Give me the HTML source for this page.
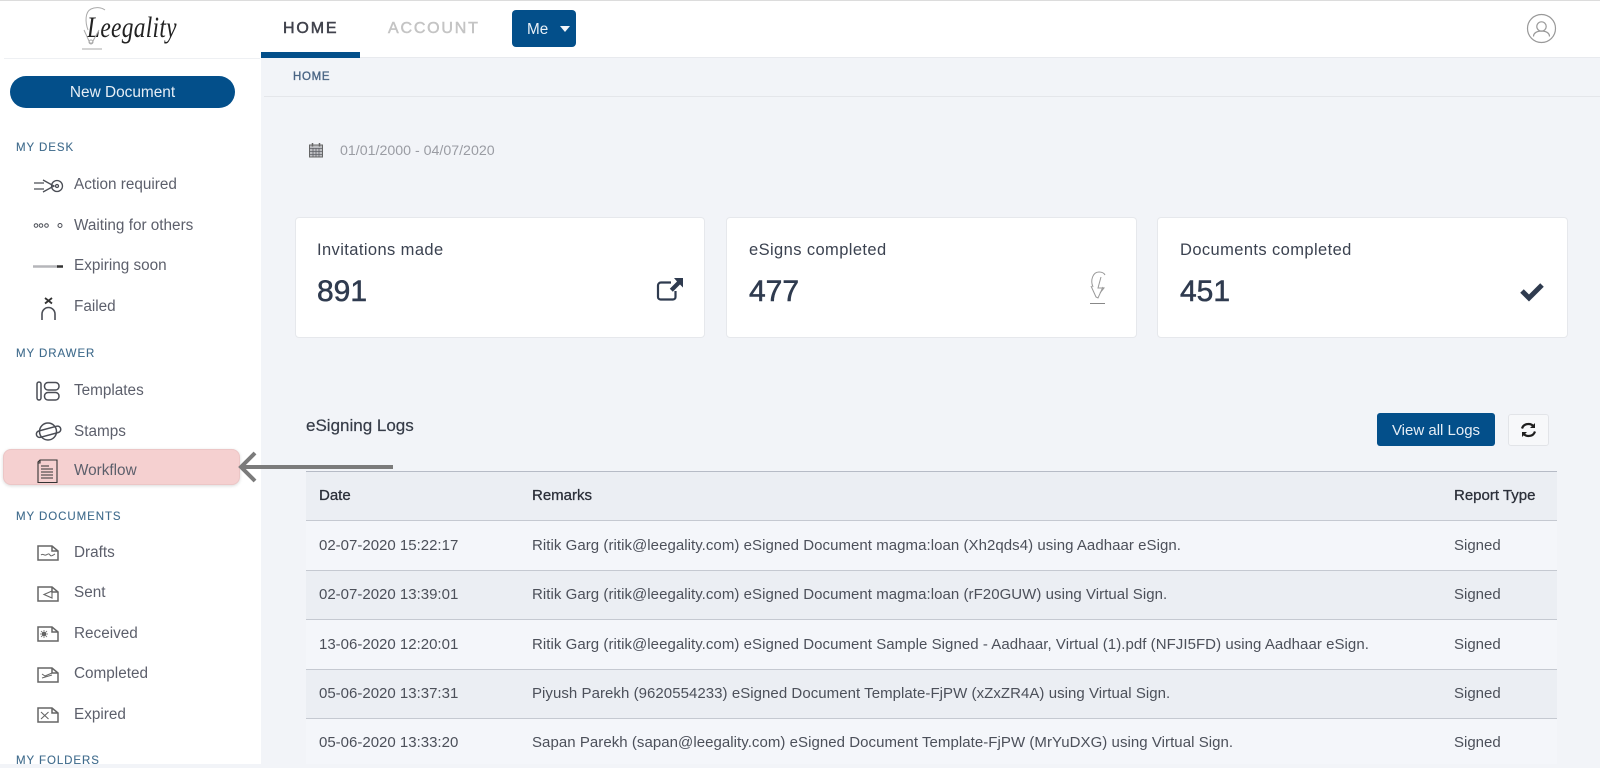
<!DOCTYPE html>
<html lang="en"><head><meta charset="utf-8"><title>Leegality</title>
<style>
*{box-sizing:border-box}
html,body{margin:0;padding:0;width:1600px;height:764px;overflow:hidden;background:#f2f4f8;font-family:"Liberation Sans",sans-serif}
.a{position:absolute;white-space:nowrap}
svg{position:absolute;overflow:visible}
.sec{position:absolute;left:16px;font-size:11.5px;letter-spacing:.93px;color:#3f6b8c;line-height:14px;white-space:nowrap;-webkit-text-stroke:.1px #3f6b8c}
.it{position:absolute;left:74px;font-size:15.3px;color:#5c5f6b;line-height:20px;white-space:nowrap}
.card{position:absolute;top:217px;height:121px;background:#fff;border:1px solid #e6e8ec;border-radius:4px}
.ct{position:absolute;font-size:16.5px;letter-spacing:.4px;color:#3b4250;line-height:20px;white-space:nowrap;top:240px}
.cn{position:absolute;font-size:30px;color:#2f3b4f;line-height:36px;top:274px;white-space:nowrap;-webkit-text-stroke:.55px #2f3b4f}
.row{position:absolute;left:306px;width:1251px;border-bottom:1px solid #c5c9d1}
.t{position:absolute;font-size:15px;color:#4c505a;line-height:20px;white-space:nowrap}
.r{letter-spacing:.05px}
.h{color:#2c303a;-webkit-text-stroke:.3px #2c303a}
</style></head><body>
<div class="a" style="left:0;top:0;width:1600px;height:1px;background:#dcdcdc"></div>
<!-- sidebar -->
<div class="a" style="left:0;top:1px;width:261px;height:763px;background:#fff"></div>
<div class="a" style="left:4px;top:58px;width:256px;height:1px;background:#eef0f3"></div>
<div class="a" style="left:87px;top:10px;font-family:'Liberation Serif',serif;font-style:italic;font-size:30px;line-height:36px;color:#222;transform-origin:0 0;transform:scaleX(.78);letter-spacing:.4px">Leegality</div>
<svg style="left:0;top:0" width="120" height="56" fill="none" stroke="#aaa"><path d="M88 30C85 22 85 12 91 9c4-2 10-2 14 1"/><path d="M84 30l5 11c1 3 3 3 4 0l6-11"/><circle cx="91" cy="42" r="2"/><path d="M82 49h20"/></svg>
<div class="a" style="left:10px;top:76px;width:225px;height:32px;border-radius:16px;background:#034f8a;color:#e6eef6;font-size:15.4px;line-height:33px;text-align:center">New Document</div>

<div class="sec" style="top:141px">MY DESK</div>
<div class="it" style="top:175px">Action required</div>
<div class="it" style="top:216px">Waiting for others</div>
<div class="it" style="top:256px">Expiring soon</div>
<div class="it" style="top:297px">Failed</div>
<div class="sec" style="top:347px">MY DRAWER</div>
<div class="it" style="top:381px">Templates</div>
<div class="it" style="top:422px">Stamps</div>
<div class="a" style="left:3px;top:449px;width:237px;height:36px;border-radius:8px;background:#f5d0d0;border:1px solid #ecc6c6;box-shadow:0 1px 3px rgba(0,0,0,.15)"></div>
<div class="it" style="top:461px">Workflow</div>
<div class="sec" style="top:510px">MY DOCUMENTS</div>
<div class="it" style="top:543px">Drafts</div>
<div class="it" style="top:583px">Sent</div>
<div class="it" style="top:624px">Received</div>
<div class="it" style="top:664px">Completed</div>
<div class="it" style="top:705px">Expired</div>
<div class="sec" style="top:754px">MY FOLDERS</div>

<!-- sidebar icons -->
<svg style="left:0;top:0" width="260" height="764" fill="none" stroke="#4a4d55" stroke-width="1.3">
<path d="M34 183h10M34 189h10M43 180l11 6-11 6"/><circle cx="57" cy="186" r="5.500"/><circle cx="57" cy="186" r="1.500"/>
<g stroke-width="1"><circle cx="36" cy="225.500" r="1.800"/><circle cx="41" cy="225.500" r="1.800"/><circle cx="46.500" cy="225.500" r="1.800"/><circle cx="60" cy="225.500" r="2"/></g>
<path d="M33 266.500h25" stroke="#b5b6ba" stroke-width="2.500"/><path d="M57 266.500h6" stroke="#333" stroke-width="2.500"/>
<path d="M45 298l7 5.500M52 298l-7 5.500" stroke-width="1.800" stroke="#333"/><path d="M42 320v-6a6.500 6.500 0 0 1 13 0v6" stroke-width="1.600"/>
<g stroke-width="1.500"><rect x="37" y="382" width="4" height="18" rx="2"/><rect x="44.500" y="382.500" width="14.500" height="7.500" rx="3.500"/><rect x="44.500" y="392.500" width="14.500" height="7.500" rx="3.500"/>
<circle cx="48" cy="431.500" r="8.500"/><rect x="36" y="428.500" width="25" height="6.500" rx="3.200" transform="rotate(-15 48.500 431.500)"/></g>
<path d="M40 460h17v22.500H38V462zM40 460v3h-2M41 466h8M41 469h12M41 472h12M41 475h12M41 478h12" stroke="#333" stroke-width="1.100"/>
<g stroke="#666" stroke-width="1.500">
<path d="M38 546h14l6 5v9H38zM52 546v5h6"/><path d="M41 555c2-2 3 1 5 0s3-2 4 0 3 0 5-1" stroke-width="1"/>
<path d="M38 587h14l6 5v9H38zM52 587v5h6"/><path d="M52 591l-8 3.500 8 3.500z" stroke-width="1.100"/>
<path d="M38 627h14l6 5v9H38zM52 627v5h6"/><circle cx="44" cy="634" r="2" fill="#444" stroke="none"/><path d="M44 630v8M40 634h8M41 631l6 6M47 631l-6 6" stroke-width=".8"/>
<path d="M38 668h14l6 5v9H38zM52 668v5h6"/><path d="M42 674l3 2 7-3M42 678l10-3" stroke-width="1"/>
<path d="M38 708h14l6 5v9H38zM52 708v5h6"/><path d="M41 712l7.500 7M48.500 712l-7.500 7" stroke-width="1.100"/>
</g>
</svg>

<!-- top bar -->
<div class="a" style="left:261px;top:1px;width:1339px;height:57px;background:#fff;border-bottom:1px solid #e8eaee"></div>
<div class="a" style="left:261px;top:52px;width:99px;height:6px;background:#034f8a"></div>
<div class="a" style="left:283px;top:19px;font-size:16px;letter-spacing:1.85px;line-height:20px;color:#40424c;-webkit-text-stroke:.5px #40424c">HOME</div>
<div class="a" style="left:388px;top:19px;font-size:16px;letter-spacing:1.8px;line-height:20px;color:#c4c4c4;-webkit-text-stroke:.5px #c4c4c4">ACCOUNT</div>
<div class="a" style="left:512px;top:10px;width:64px;height:37px;border-radius:4px;background:#034f8a"></div>
<div class="a" style="left:527px;top:20px;font-size:15.3px;line-height:20px;color:#e8f0f7">Me</div>
<svg style="left:560px;top:26px" width="12" height="7"><path d="M0 0h10L5 6z" fill="#f2f6fa"/></svg>
<svg style="left:1527px;top:14px" width="30" height="30" fill="none" stroke="#999" stroke-width="1.200"><circle cx="14.500" cy="14.500" r="14"/><circle cx="14.500" cy="12.500" r="4.700"/><path d="M6.500 22.500c0-3.500 3.500-5.500 8-5.500s8 2 8 5.500"/></svg>

<!-- breadcrumb -->
<div class="a" style="left:293px;top:70px;font-size:11.5px;letter-spacing:.7px;line-height:14px;color:#4a6584;-webkit-text-stroke:.35px #4a6584">HOME</div>
<div class="a" style="left:264px;top:96px;width:1336px;height:1px;background:#e4e6ea"></div>
<svg style="left:309px;top:143px" width="15" height="15" fill="none" stroke="#666" stroke-width="1"><rect x=".5" y="2" width="13" height="12" fill="#bdbec2"/><path d="M.5 5.500h13M.5 8.500h13M.5 11.500h13M4 5v9M7 5v9M10 5v9" stroke="#5f6067" stroke-width=".8"/><path d="M3.500 0v3.500M10.500 0v3.500" stroke-width="1.500"/></svg>
<div class="a" style="left:340px;top:141px;font-size:14.2px;line-height:20px;color:#9a9ca3">01/01/2000 - 04/07/2020</div>

<!-- cards -->
<div class="card" style="left:295px;width:410px"></div>
<div class="card" style="left:726px;width:411px"></div>
<div class="card" style="left:1157px;width:411px"></div>
<div class="ct" style="left:317px">Invitations made</div><div class="cn" style="left:317px">891</div>
<div class="ct" style="left:749px">eSigns completed</div><div class="cn" style="left:749px">477</div>
<div class="ct" style="left:1180px">Documents completed</div><div class="cn" style="left:1180px">451</div>
<svg style="left:656px;top:277px" width="28" height="24" fill="none"><path d="M15 5.500H5a3 3 0 0 0-3 3V20a2.500 2.500 0 0 0 2.500 2.500H17a2.500 2.500 0 0 0 2.500-2.500v-6" stroke="#2f3b4f" stroke-width="2.200"/><path d="M27 1v9.500l-3-3-7.200 7.200-3-3 7.200-7.200-3-3.500z" fill="#2f3b4f"/></svg>
<svg style="left:1087px;top:271px" width="22" height="36" fill="none" stroke="#999"><path d="M6 16C3 9 6 1 12 1c3 0 5 1 6 3"/><path d="M4 15l5 11 2 1 5-11"/><path d="M14 6l-3 11h6l-4 5"/><path d="M3 32.500h15" stroke="#888"/></svg>
<svg style="left:1520px;top:281px" width="24" height="20"><path d="M2 10l7 7L22 4" fill="none" stroke="#2f3b4f" stroke-width="5"/></svg>

<!-- logs header -->
<div class="a" style="left:306px;top:416px;font-size:17px;line-height:20px;color:#363c48;-webkit-text-stroke:.2px #363c48">eSigning Logs</div>
<div class="a" style="left:1377px;top:413px;width:118px;height:33px;border-radius:3px;background:#034f8a;color:#e6eef6;font-size:15px;line-height:35px;text-align:center">View all Logs</div>
<div class="a" style="left:1508px;top:414px;width:41px;height:32px;border-radius:3px;background:#f7f8fa;border:1px solid #e2e4e8"></div>
<svg style="left:1520px;top:422px" width="17" height="16" fill="none" stroke="#1f1f1f" stroke-width="2.200"><path d="M2 6.500C3 3.500 5.500 2 8.500 2c2 0 4 1 5 2.500M15 9.500C14 12.500 11.500 14 8.500 14c-2 0-4-1-5-2.500"/><path d="M15 1v5h-5zM2 15v-5h5z" fill="#1f1f1f" stroke="none"/></svg>

<!-- table -->
<div class="a" style="left:306px;top:471px;width:1251px;height:1px;background:#b6bbc6"></div>
<div class="row" style="top:472px;height:49px;background:#ebeef3"></div>
<div class="row" style="top:521px;height:50px;background:#f4f6fa"></div>
<div class="row" style="top:571px;height:49px;background:#ebeef3"></div>
<div class="row" style="top:620px;height:50px;background:#f4f6fa"></div>
<div class="row" style="top:670px;height:49px;background:#ebeef3"></div>
<div class="row" style="top:719px;height:45px;background:#f4f6fa;border:0"></div>

<div class="t h" style="left:319px;top:486px">Date</div><div class="t h" style="left:532px;top:486px">Remarks</div><div class="t h" style="left:1454px;top:486px">Report Type</div>

<div class="t" style="left:319px;top:536px">02-07-2020 15:22:17</div>
<div class="t r" style="left:532px;top:536px">Ritik Garg (ritik@leegality.com) eSigned Document magma:loan (Xh2qds4) using Aadhaar eSign.</div>
<div class="t" style="left:1454px;top:536px">Signed</div>

<div class="t" style="left:319px;top:585px">02-07-2020 13:39:01</div>
<div class="t r" style="left:532px;top:585px">Ritik Garg (ritik@leegality.com) eSigned Document magma:loan (rF20GUW) using Virtual Sign.</div>
<div class="t" style="left:1454px;top:585px">Signed</div>

<div class="t" style="left:319px;top:635px">13-06-2020 12:20:01</div>
<div class="t r" style="left:532px;top:635px">Ritik Garg (ritik@leegality.com) eSigned Document Sample Signed - Aadhaar, Virtual (1).pdf (NFJI5FD) using Aadhaar eSign.</div>
<div class="t" style="left:1454px;top:635px">Signed</div>

<div class="t" style="left:319px;top:684px">05-06-2020 13:37:31</div>
<div class="t r" style="left:532px;top:684px">Piyush Parekh (9620554233) eSigned Document Template-FjPW (xZxZR4A) using Virtual Sign.</div>
<div class="t" style="left:1454px;top:684px">Signed</div>

<div class="t" style="left:319px;top:733px">05-06-2020 13:33:20</div>
<div class="t r" style="left:532px;top:733px">Sapan Parekh (sapan@leegality.com) eSigned Document Template-FjPW (MrYuDXG) using Virtual Sign.</div>
<div class="t" style="left:1454px;top:733px">Signed</div>

<!-- arrow -->
<svg style="left:0;top:0" width="400" height="500" fill="none" stroke="#7b7b7b" stroke-width="4"><path d="M393 467H242M255 453l-14 14 14 14"/></svg>
</body></html>
